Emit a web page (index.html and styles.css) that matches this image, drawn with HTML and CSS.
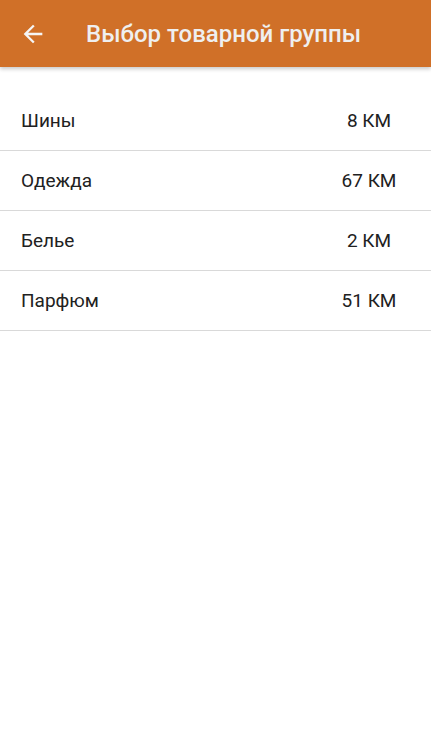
FILE: index.html
```html
<!DOCTYPE html>
<html lang="ru">
<head>
  <meta charset="UTF-8" />
  <meta name="viewport" content="width=device-width, initial-scale=1.0" />
  <title>Выбор товарной группы</title>
  <link rel="stylesheet" href="styles.css">
</head>
<body>
  <!-- Шапка -->
  <header class="toolbar">
    <button class="back" type="button" aria-label="Назад">
      <svg viewBox="0 0 24 24" width="28" height="28"><path d="M20 11H7.83l5.59-5.59L12 4l-8 8 8 8 1.41-1.41L7.83 13H20v-2z" fill="currentColor"/></svg>
    </button>
    <h1>Выбор товарной группы</h1>
  </header>

  <!-- Список групп -->
  <ul class="groups">
    <li><span class="name">Шины</span><span class="count">8 КМ</span></li>
    <li><span class="name">Одежда</span><span class="count">67 КМ</span></li>
    <li><span class="name">Белье</span><span class="count">2 КМ</span></li>
    <li><span class="name">Парфюм</span><span class="count">51 КМ</span></li>
  </ul>
</body>
</html>
```

FILE: styles.css
```css
* { box-sizing: border-box; margin: 0; padding: 0; font-family: Roboto, "Noto Sans", sans-serif; }
body { background: #fff; }
.toolbar { height: 67px; background-color: #d07028; color: #efefef; display: flex; align-items: center; box-shadow: 0 2px 4px rgba(0, 0, 0, 0.22); }
.back { width: 28px; height: 28px; margin-left: 19px; border: none; background: transparent; color: #f5f5f5; display: flex; }
.toolbar h1 { font-size: 24px; font-weight: 500; margin-left: 39px; }
.groups { list-style: none; margin-top: 24px; }
.groups li { height: 60px; display: flex; align-items: center; justify-content: space-between; padding-left: 21px; border-bottom: 1px solid #d9d9d9; font-size: 19px; color: #212121; }
.count { width: 80px; margin-right: 22px; text-align: center; }
```
